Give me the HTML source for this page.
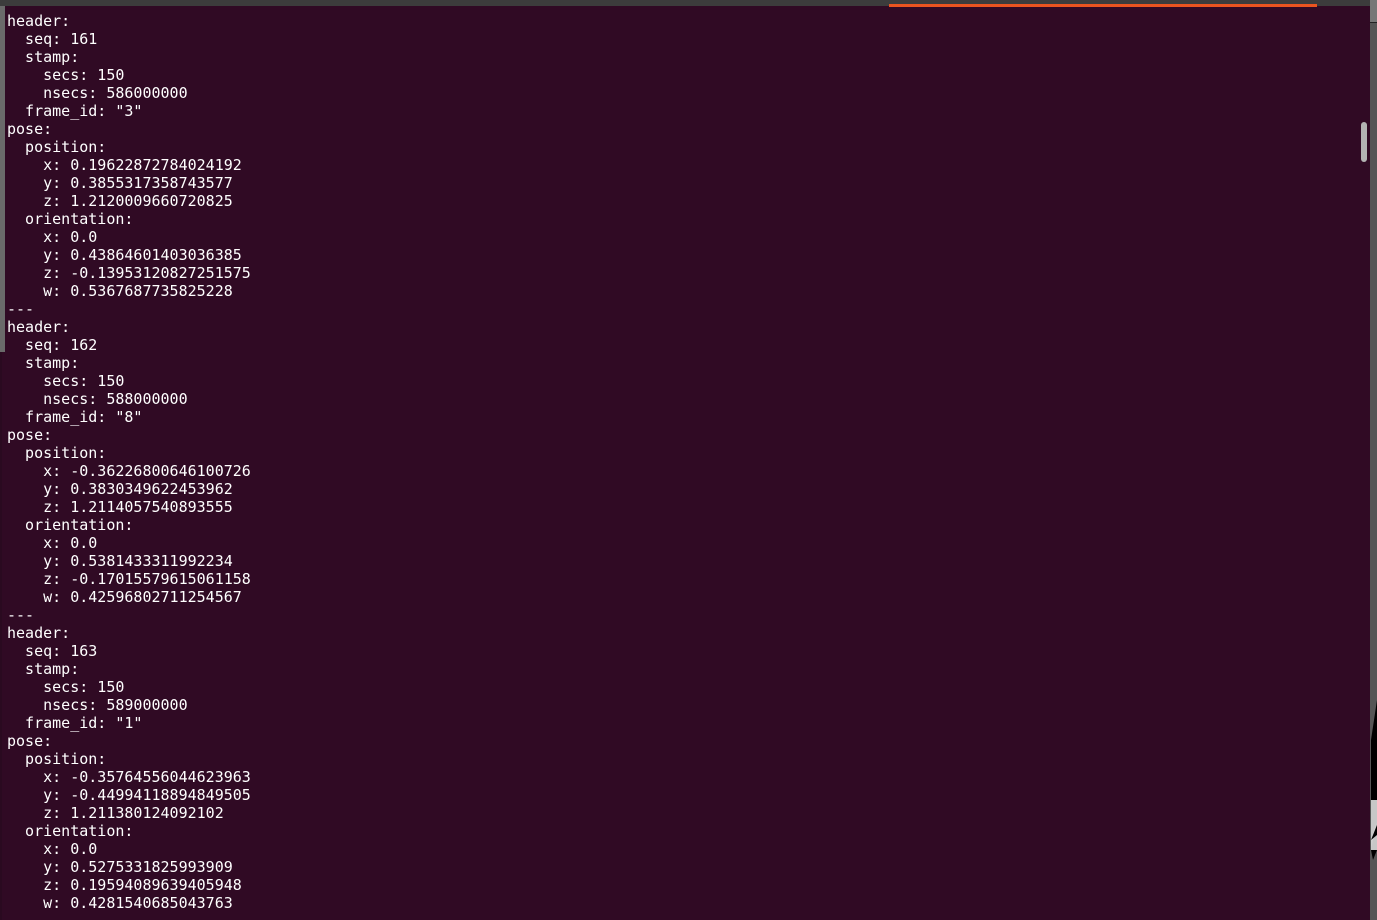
<!DOCTYPE html>
<html><head><meta charset="utf-8"><style>
html,body{margin:0;padding:0;width:1377px;height:920px;overflow:hidden;background:#300a24;}
#top{position:absolute;left:0;top:0;width:1377px;height:6px;background:#3c3c3c;}
#orange{position:absolute;left:889px;top:4px;width:428px;height:3px;background:#e95420;}
#left{position:absolute;left:0;top:6px;width:5px;height:346px;background:#6a6a6a;}
#left2{position:absolute;left:0;top:352px;width:2px;height:568px;background:#2a0a20;}
#right{position:absolute;left:1370px;top:0;width:7px;height:920px;background:#555;}
#rtop{position:absolute;left:1370px;top:0;width:7px;height:22px;background:#777;border-bottom:1px solid #222;}
#thumb{position:absolute;left:1361px;top:122px;width:6px;height:40px;border-radius:3px;background:#b3b3b3;}
#blk{position:absolute;left:1371px;top:700px;width:6px;height:200px;}
pre{position:absolute;left:7px;top:12px;margin:0;font-family:"DejaVu Sans Mono","Liberation Mono",monospace;font-size:15px;line-height:18px;color:#ffffff;}
</style></head><body>
<div id="top"></div><div id="orange"></div>
<div id="left"></div><div id="left2"></div>
<div id="right"></div><div id="rtop"></div>
<svg id="blk" width="6" height="200"><path d="M6 0 L6 120 L0 140 L0 40 Z" fill="#000"/><path d="M6 120 L6 150 L2 160 L0 150 Z" fill="#000"/><rect x="0" y="100" width="6" height="50" fill="#ddd" opacity="0.9"/><path d="M0 140 L6 125 L6 135 Z" fill="#000"/></svg>
<div id="thumb"></div>
<pre>header:
  seq: 161
  stamp:
    secs: 150
    nsecs: 586000000
  frame_id: "3"
pose:
  position:
    x: 0.19622872784024192
    y: 0.3855317358743577
    z: 1.2120009660720825
  orientation:
    x: 0.0
    y: 0.43864601403036385
    z: -0.13953120827251575
    w: 0.5367687735825228
---
header:
  seq: 162
  stamp:
    secs: 150
    nsecs: 588000000
  frame_id: "8"
pose:
  position:
    x: -0.36226800646100726
    y: 0.3830349622453962
    z: 1.2114057540893555
  orientation:
    x: 0.0
    y: 0.5381433311992234
    z: -0.17015579615061158
    w: 0.42596802711254567
---
header:
  seq: 163
  stamp:
    secs: 150
    nsecs: 589000000
  frame_id: "1"
pose:
  position:
    x: -0.35764556044623963
    y: -0.44994118894849505
    z: 1.211380124092102
  orientation:
    x: 0.0
    y: 0.5275331825993909
    z: 0.19594089639405948
    w: 0.4281540685043763</pre>
</body></html>
